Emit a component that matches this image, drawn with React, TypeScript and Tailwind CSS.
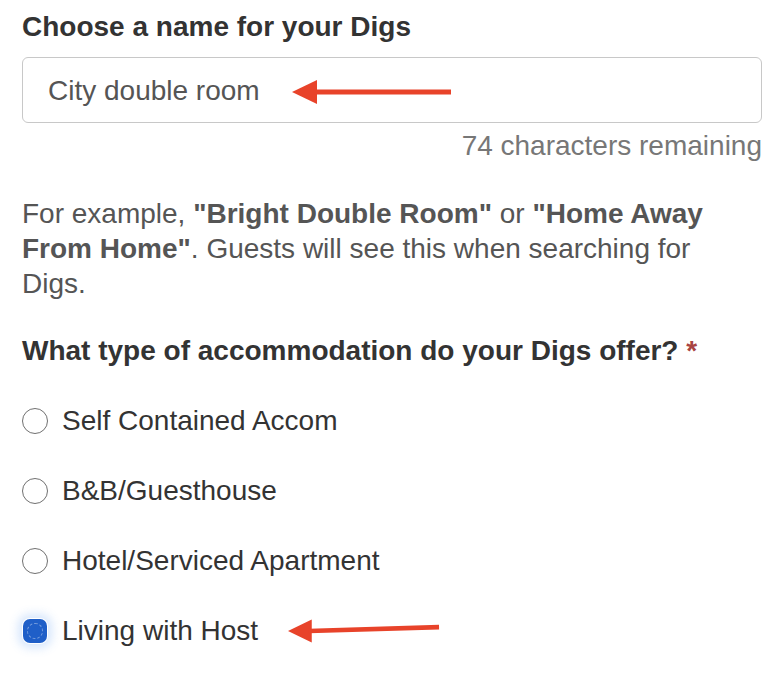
import React from "react";

const OPTIONS = [
  { label: "Self Contained Accom", checked: false },
  { label: "B&B/Guesthouse", checked: false },
  { label: "Hotel/Serviced Apartment", checked: false },
  { label: "Living with Host", checked: true },
];

function Arrow({ className, tilt = 0 }: { className: string; tilt?: number }) {
  return (
    <svg className={className} viewBox="0 0 160 26" fill="none">
      <polygon points="0,13 25,1 25,25" fill="#e8432a" />
      <line x1="22" y1="13" x2="159" y2={13 - tilt} stroke="#e8432a" strokeWidth="5" />
    </svg>
  );
}

function Radio({ checked }: { checked: boolean }) {
  if (checked) {
    return (
      <span className="flex h-[24px] w-[24px] shrink-0 items-center justify-center rounded-[7px] bg-[#1f5fc8] ml-[1px] mr-[1px] shadow-[0_0_0_1px_#ffffff,0_0_10px_5px_rgba(70,140,240,0.22)]">
        <span className="h-[16px] w-[16px] rounded-full border border-dashed border-white/40" />
      </span>
    );
  }
  return <span className="h-[26px] w-[26px] shrink-0 rounded-full border-[1.5px] border-[#707070] bg-white" />;
}

export default function App() {
  return (
    <div className="min-h-[692px] w-[784px] bg-white px-[22px] pt-[11px] font-['Liberation_Sans',Arial,sans-serif]">
      {/* ── Name field ───────────────────────────── */}
      <h2 className="text-[28px] font-bold leading-8 text-[#333]">Choose a name for your Digs</h2>

      <div className="relative mt-[14px]">
        <div className="flex h-[66px] items-center rounded-[6px] border border-[#c8c8c8] px-[25px] pt-[2px] text-[28px] text-[#555]">
          City double room
        </div>
        <Arrow className="absolute left-[270px] top-[22px] h-[26px] w-[160px]" />
      </div>

      <p className="mt-[7px] text-right text-[28px] leading-8 text-[#777]">74 characters remaining</p>

      <p className="mt-[34px] w-[700px] text-[28px] leading-[35px] text-[#555]">
        For example, <b>"Bright Double Room"</b> or <b>"Home Away From Home"</b>. Guests will see this when searching for Digs.
      </p>

      {/* ── Accommodation type ───────────────────── */}
      <h2 className="mt-[34px] text-[28px] font-bold leading-8 text-[#333]">
        What type of accommodation do your Digs offer? <span className="text-[#a94442]">*</span>
      </h2>

      <div className="mt-[19px] flex flex-col">
        {OPTIONS.map((o) => (
          <label key={o.label} className="relative flex h-[70px] items-center gap-[14px] text-[28px] leading-8 text-[#333]">
            <Radio checked={o.checked} />
            <span>{o.label}</span>
            {o.checked && <Arrow tilt={4} className="absolute left-[266px] top-[22px] h-[26px] w-[152px]" />}
          </label>
        ))}
      </div>
    </div>
  );
}
